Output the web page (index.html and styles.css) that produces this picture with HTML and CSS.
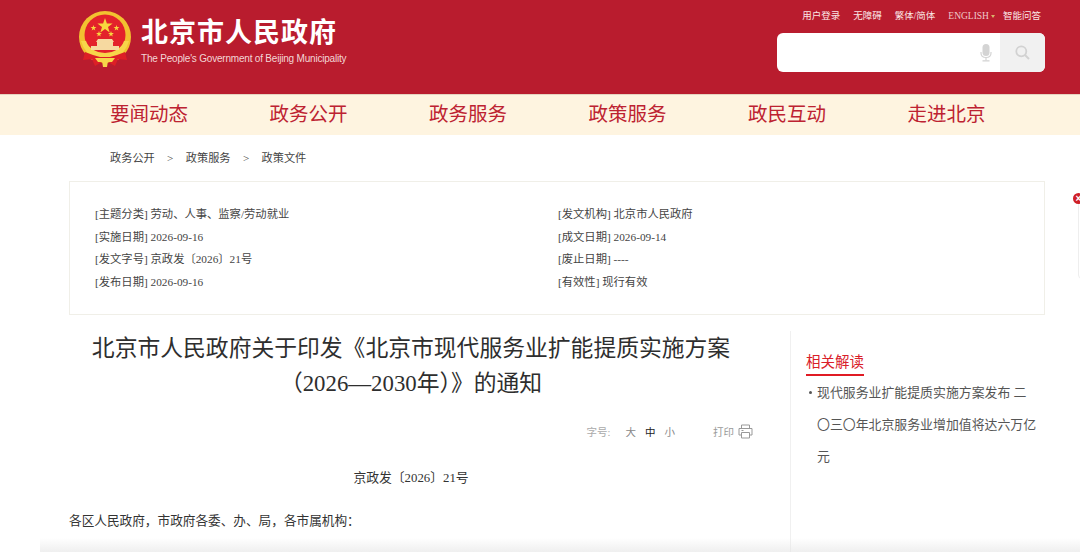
FILE: index.html
```html
<!DOCTYPE html>
<html>
<head>
    <title>北京市人民政府</title>
    <meta name="viewport" content="width=device-width, initial-scale=1">
    <link rel="stylesheet" href="styles.css">
</head>
<body>
    <header class="header">
        <a class="logo">
            <svg class="emblem" width="54" height="58" viewBox="0 0 54 58">
                <circle cx="27" cy="26" r="26" fill="#f2c230"/>
                <circle cx="27" cy="24" r="20.5" fill="#e3222b"/>
                <path d="M3 30 Q7 44 20 49 L34 49 Q47 44 51 30 L46 30 Q42 41 27 42 Q12 41 8 30 Z" fill="#f7d64a"/>
                <polygon points="27,7 28.9,12.4 34.6,12.5 30,15.9 31.7,21.4 27,18.1 22.3,21.4 24,15.9 19.4,12.5 25.1,12.4" fill="#f8d73e"/>
                <polygon points="15.5,14 16.2,16.1 18.4,16.1 16.6,17.4 17.3,19.5 15.5,18.2 13.7,19.5 14.4,17.4 12.6,16.1 14.8,16.1" fill="#f8d73e"/>
                <polygon points="38.5,14 39.2,16.1 41.4,16.1 39.6,17.4 40.3,19.5 38.5,18.2 36.7,19.5 37.4,17.4 35.6,16.1 37.8,16.1" fill="#f8d73e"/>
                <polygon points="21,20 21.7,22.1 23.9,22.1 22.1,23.4 22.8,25.5 21,24.2 19.2,25.5 19.9,23.4 18.1,22.1 20.3,22.1" fill="#f8d73e"/>
                <polygon points="33,20 33.7,22.1 35.9,22.1 34.1,23.4 34.8,25.5 33,24.2 31.2,25.5 31.9,23.4 30.1,22.1 32.3,22.1" fill="#f8d73e"/>
                <path d="M20 28 H34 L36 31 H18 Z M19 31 H35 V35 H19 Z M13 35 H41 V39 H13 Z" fill="#f6d9a0"/>
                <path d="M7 41 L15 44 L22 46 H32 L39 44 L47 41 L49 49 L40 48 L37 55 L30 51 H24 L17 55 L14 48 L5 49 Z" fill="#dd1f26"/>
                <path d="M17 47 H37 L34 51 H20 Z M24 50 H30 L29 56 H25 Z" fill="#f7d64a"/>
            </svg>
            <span class="logo-text">
                <strong class="logo-cn">北京市人民政府</strong>
                <span class="logo-en">The People's Government of Beijing Municipality</span>
            </span>
        </a>
        <div class="header-right">
            <div class="top-links">
                <a>用户登录</a>
                <a>无障碍</a>
                <a>繁体/简体</a>
                <a class="lang">ENGLISH<i class="caret"></i></a>
                <a>智能问答</a>
            </div>
            <div class="search">
                <div class="search-input">
                    <svg width="12" height="18" viewBox="0 0 12 18">
                        <rect x="2.5" y="0" width="7" height="12" rx="3.5" fill="#d4d4d4"/>
                        <path d="M1 8 V9 Q1 13.5 6 13.5 Q11 13.5 11 9 V8" fill="none" stroke="#d4d4d4" stroke-width="1.2"/>
                        <rect x="5.4" y="13.5" width="1.2" height="3" fill="#d4d4d4"/>
                        <rect x="2.5" y="16.2" width="7" height="1.3" fill="#d4d4d4"/>
                    </svg>
                </div>
                <div class="search-btn">
                    <svg width="15" height="15" viewBox="0 0 15 15">
                        <circle cx="6.3" cy="6.3" r="5" fill="none" stroke="#d2d2d2" stroke-width="1.8"/>
                        <path d="M10 10 L14 14" stroke="#d2d2d2" stroke-width="2"/>
                    </svg>
                </div>
            </div>
        </div>
    </header>

    <nav class="nav">
        <a>要闻动态</a>
        <a>政务公开</a>
        <a>政务服务</a>
        <a>政策服务</a>
        <a>政民互动</a>
        <a>走进北京</a>
    </nav>

    <div class="crumbs">
        <a>政务公开</a><span class="sep">&gt;</span><a>政策服务</a><span class="sep">&gt;</span><a>政策文件</a>
    </div>

    <section class="info">
        <ul>
            <li>[主题分类] 劳动、人事、监察/劳动就业</li>
            <li>[实施日期] 2026-09-16</li>
            <li>[发文字号] 京政发〔2026〕21号</li>
            <li>[发布日期] 2026-09-16</li>
        </ul>
        <ul>
            <li>[发文机构] 北京市人民政府</li>
            <li>[成文日期] 2026-09-14</li>
            <li>[废止日期] ----</li>
            <li>[有效性] 现行有效</li>
        </ul>
    </section>

    <div class="content">
        <main class="article">
            <h1>北京市人民政府关于印发《北京市现代服务业扩能提质实施方案<br>（2026—2030年）》的通知</h1>
            <div class="tools">
                <span class="size-label">字号:</span>
                <a>大</a><a class="on">中</a><a>小</a>
                <span class="print">打印
                    <svg width="15" height="15" viewBox="0 0 15 15" fill="none" stroke="#999" stroke-width="1">
                        <path d="M3.5 4.5 V1 H11.5 V4.5"/>
                        <path d="M3.5 11 H1 V4.5 H14 V11 H11.5"/>
                        <path d="M3.5 8.5 H11.5 V14 H3.5 Z"/>
                        <path d="M3.5 6.5 H5.5"/>
                    </svg>
                </span>
            </div>
            <p class="doc-no">京政发〔2026〕21号</p>
            <p class="greeting">各区人民政府，市政府各委、办、局，各市属机构：</p>
        </main>
        <aside class="side">
            <h2><span>相关解读</span></h2>
            <ul>
                <li>现代服务业扩能提质实施方案发布 二〇三〇年北京服务业增加值将达六万亿元</li>
            </ul>
        </aside>
    </div>

    <div class="popup"><span class="popup-close">×</span></div>
    <div class="bottom-fade"></div>
</body>
</html>
```

FILE: styles.css
```css
html, body {
    height: 100%;
    overflow: hidden;
}
body {
    margin: 0;
    background: #fff;
    color: #333;
    font-family: "Liberation Serif", "Noto Sans CJK SC", serif;
}
ul {
    list-style: none;
    margin: 0;
    padding: 0;
}

.header {
    height: 94px;
    background: #b91c2e;
    border-bottom: 1px solid #e6d3c0;
    display: flex;
    justify-content: space-between;
    padding: 0 35px 0 78px;
}
.logo {
    display: flex;
    align-items: flex-start;
    padding-top: 11px;
    color: #fff;
}
.logo-text {
    display: flex;
    flex-direction: column;
    margin-left: 9px;
}
.logo-cn {
    font-family: "Noto Sans CJK SC", sans-serif;
    font-size: 27px;
    line-height: 40px;
    letter-spacing: 1px;
    white-space: nowrap;
}
.logo-en {
    font-family: "Liberation Sans", sans-serif;
    font-size: 10px;
    line-height: 14px;
    margin-top: 1px;
    letter-spacing: -0.2px;
    color: #f3d6d6;
    white-space: nowrap;
}
.header-right {
    width: 268px;
}
.top-links {
    display: flex;
    justify-content: flex-end;
    gap: 13px;
    margin-top: 9px;
    margin-right: 4px;
    font-size: 9.5px;
    line-height: 14px;
    color: #fbe6e6;
    white-space: nowrap;
}
.top-links .lang {
    margin-right: -5px;
    color: #efc9c9;
}
.caret {
    display: inline-block;
    margin-left: 2px;
    vertical-align: 1px;
    border: 2.5px solid transparent;
    border-top: 3px solid #d8b26a;
    border-bottom: 0;
}
.search {
    display: flex;
    height: 39px;
    margin-top: 10px;
    background: #fff;
    border-radius: 6px;
    overflow: hidden;
}
.search-input {
    flex: 1;
    display: flex;
    align-items: center;
    justify-content: flex-end;
    padding-right: 8px;
}
.search-btn {
    width: 45px;
    background: #f1f1f1;
    display: flex;
    align-items: center;
    justify-content: center;
}

.nav {
    height: 40px;
    background: #fef4e0;
    display: flex;
    gap: 81.5px;
    padding-left: 110px;
    font-size: 19.5px;
    line-height: 40px;
    color: #bd2231;
    white-space: nowrap;
}

.crumbs {
    height: 46px;
    padding-left: 110px;
    font-size: 11.2px;
    line-height: 46px;
    color: #444;
}
.sep {
    display: inline-block;
    width: 31px;
    text-align: center;
}

.info {
    width: 974px;
    height: 132px;
    margin-left: 69px;
    border: 1px solid #f0efe8;
    display: grid;
    grid-template-columns: 463px 1fr;
    padding-left: 25px;
    box-sizing: content-box;
    width: 949px;
    font-size: 11.3px;
    line-height: 22.7px;
    color: #444;
}
.info ul {
    padding-top: 21px;
}

.content {
    display: flex;
    margin: 16px 0 0 69px;
    height: 230px;
}
.article {
    width: 684px;
}
.article h1 {
    margin: 0;
    font-size: 22.8px;
    font-weight: normal;
    line-height: 35px;
    color: #2e2e2e;
    text-align: center;
}
.tools {
    display: flex;
    justify-content: flex-end;
    align-items: center;
    margin-top: 22px;
    height: 16px;
    font-size: 10.5px;
    color: #aaa;
}
.size-label {
    margin-right: 15px;
}
.tools a {
    margin-right: 9px;
    color: #888;
}
.tools a.on {
    color: #222;
}
.print {
    display: flex;
    align-items: center;
    gap: 4px;
    margin-left: 29px;
    color: #999;
}
.doc-no {
    margin: 29px 0 0;
    font-size: 12.8px;
    line-height: 20px;
    text-align: center;
}
.greeting {
    margin: 23px 0 0;
    font-size: 12.65px;
    line-height: 20px;
}
.side {
    margin-left: 37px;
    width: 240px;
    padding-left: 15px;
    border-left: 1px solid #f0f0f0;
}
.side h2 {
    margin: 20px 0 0;
    font-size: 14.5px;
    font-weight: normal;
    line-height: 22px;
    color: #d9202a;
}
.side h2 span {
    display: inline-block;
    border-bottom: 2px solid #e01b24;
    padding-bottom: 1px;
}
.side ul {
    margin-top: 1px;
    font-size: 12.9px;
    line-height: 32px;
    color: #555;
}
.side li {
    position: relative;
    padding-left: 11px;
    width: 222px;
}
.side li::before {
    content: "";
    position: absolute;
    left: 3px;
    top: 14px;
    width: 3px;
    height: 3px;
    background: #555;
    border-radius: 50%;
}

.popup {
    position: absolute;
    left: 1078px;
    top: 197px;
    width: 30px;
    height: 80px;
    background: #fff;
    border: 1px solid #eee;
    border-radius: 4px;
}
.popup-close {
    position: absolute;
    left: -6px;
    top: -5px;
    width: 11px;
    height: 11px;
    border-radius: 50%;
    background: #cf2027;
    color: #fff;
    font: bold 10px/11px "Liberation Sans", sans-serif;
    text-align: center;
}
.bottom-fade {
    position: absolute;
    left: 40px;
    right: 0;
    bottom: 0;
    height: 14px;
    background: linear-gradient(to bottom, rgba(230,230,230,0), rgba(226,226,226,0.55));
}
```
